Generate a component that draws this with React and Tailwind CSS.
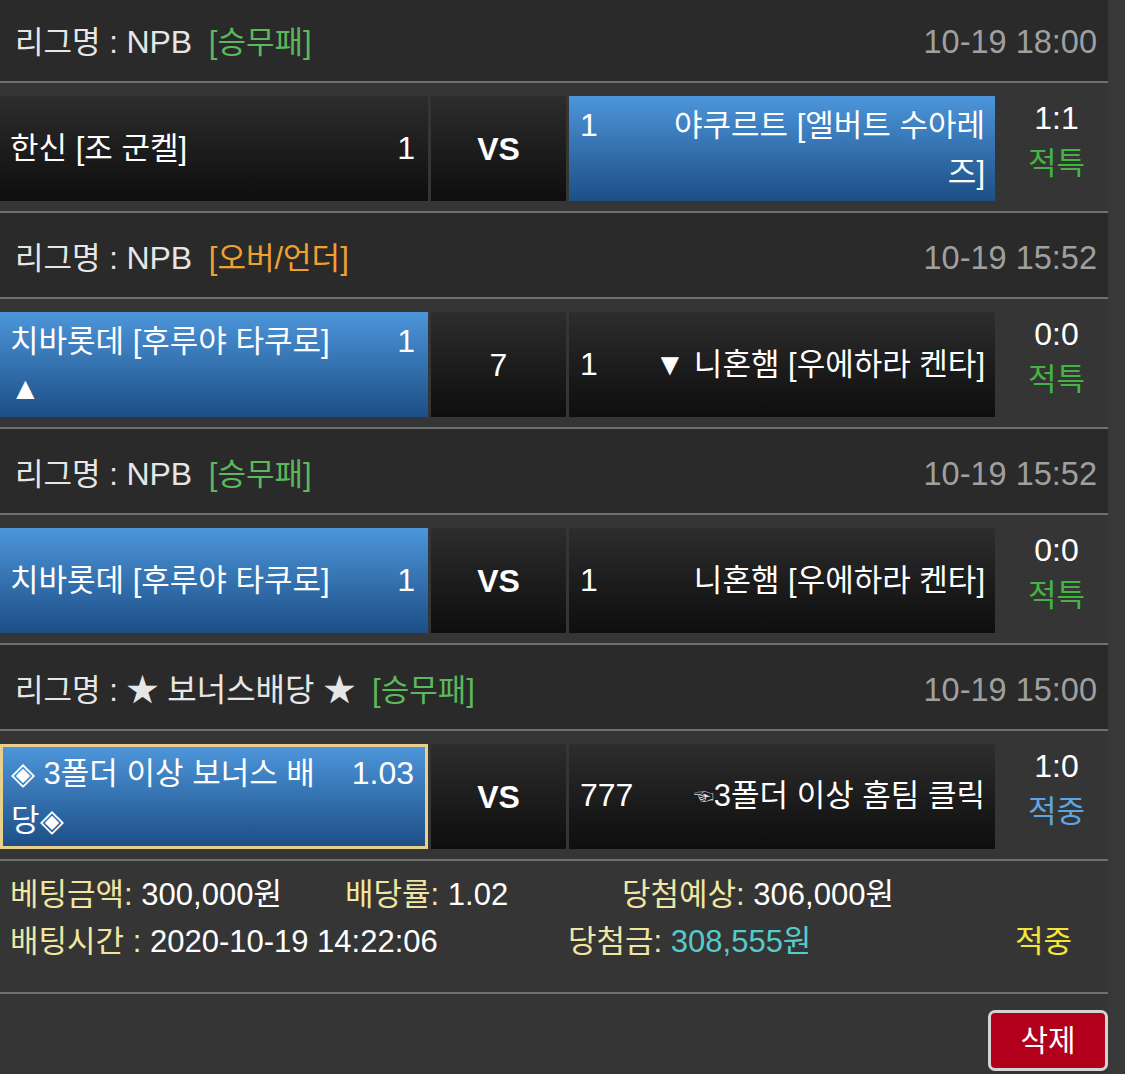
import React from 'react';

const games = [
  {
    id: 1,
    league: 'NPB',
    type: '[승무패]',
    typeColor: 'text-[#5cb85c]',
    time: '10-19 18:00',
    home: { name: '한신 [조 군켈]', odds: '1', picked: false },
    mid: 'VS',
    away: { name: '야쿠르트 [엘버트 수아레즈]', odds: '1', picked: true },
    score: '1:1',
    result: '적특',
    resultColor: 'text-[#43b443]',
  },
  {
    id: 2,
    league: 'NPB',
    type: '[오버/언더]',
    typeColor: 'text-[#f0a030]',
    time: '10-19 15:52',
    home: { name: '치바롯데 [후루야 타쿠로] ▲', odds: '1', picked: true },
    mid: '7',
    away: { name: '▼ 니혼햄 [우에하라 켄타]', odds: '1', picked: false },
    score: '0:0',
    result: '적특',
    resultColor: 'text-[#43b443]',
  },
  {
    id: 3,
    league: 'NPB',
    type: '[승무패]',
    typeColor: 'text-[#5cb85c]',
    time: '10-19 15:52',
    home: { name: '치바롯데 [후루야 타쿠로]', odds: '1', picked: true },
    mid: 'VS',
    away: { name: '니혼햄 [우에하라 켄타]', odds: '1', picked: false },
    score: '0:0',
    result: '적특',
    resultColor: 'text-[#43b443]',
  },
  {
    id: 4,
    league: '★ 보너스배당 ★',
    type: '[승무패]',
    typeColor: 'text-[#5cb85c]',
    time: '10-19 15:00',
    home: { name: '◈ 3폴더 이상 보너스 배당◈', odds: '1.03', picked: true, bonus: true },
    mid: 'VS',
    away: { name: '3폴더 이상 홈팀 클릭', odds: '777', picked: false, hand: true },
    score: '1:0',
    result: '적중',
    resultColor: 'text-[#5ea5e3]',
  },
];

const cellBg = (picked) =>
  picked
    ? 'bg-gradient-to-b from-[#4d96db] to-[#1d4f86]'
    : 'bg-gradient-to-b from-[#2d2d2d] to-[#0e0e0e]';

const GameBlock = ({ g }) => (
  <div>
    {/* 리그 헤더 */}
    <div className="h-[86px] bg-[#2a2a2a] flex items-center justify-between pl-[15px] pr-[11px] pt-[6px] border-b-2 border-[#6f6f6f]">
      <div className="text-[#e6e6e6]">
        리그명 : <span className="text-[32px]">{g.league}</span>{' '}
        <span className={`ml-[8px] ${g.typeColor}`}>{g.type}</span>
      </div>
      <div className="text-[#a0a0a0] text-[32.5px]">{g.time}</div>
    </div>

    {/* 경기 줄 */}
    <div className="h-[130px] flex pt-[13px] pb-[10px] border-b-2 border-[#6f6f6f]">
      <div
        className={`w-[428px] h-[105px] flex items-center ${cellBg(g.home.picked)} ${
          g.home.bonus ? 'border-[3px] border-[#e9d18c] pl-[8px] pr-[11px]' : 'pl-[10px] pr-[13px]'
        }`}
      >
        <div className="flex-1 flex items-start justify-between leading-[47px] text-white">
          <span className="w-[328px]">{g.home.name}</span>
          <span className="text-[32px]">{g.home.odds}</span>
        </div>
      </div>
      <div className={`ml-[3px] w-[135px] h-[105px] flex items-center justify-center text-white ${cellBg(false)}`}>
        <span className={g.mid === 'VS' ? 'font-bold text-[32px]' : 'text-[32px]'}>{g.mid}</span>
      </div>
      <div className={`ml-[3px] w-[426px] h-[105px] flex items-center pl-[11px] pr-[10px] ${cellBg(g.away.picked)}`}>
        <div className="flex-1 flex items-start justify-between leading-[47px] text-white">
          <span className="text-[32px]">{g.away.odds}</span>
          <span className="w-[338px] text-right">
            {g.away.hand && <span className="text-[20px] text-[#dddddd] align-middle">☜</span>}
            {g.away.name}
          </span>
        </div>
      </div>
      <div className="flex-1 flex flex-col items-center pl-[10px] leading-[45px]">
        <span className="text-white text-[32px]">{g.score}</span>
        <span className={g.resultColor}>{g.result}</span>
      </div>
    </div>
  </div>
);

const App = () => {
  return (
    <div
      className="min-h-[1074px] bg-[#383838] overflow-hidden text-[31px]"
      style={{ fontFamily: '"Liberation Sans", "Noto Sans CJK KR", sans-serif' }}
    >
      <div className="w-[1108px] bg-[#353535] -mt-[3px]">
        {games.map((g) => (
          <GameBlock key={g.id} g={g} />
        ))}

        {/* 베팅 요약 */}
        <div className="pt-[10px] pb-[27px] pl-[10px] leading-[47px] border-b-2 border-[#6f6f6f]">
          <div className="flex">
            <span className="w-[335px]">
              <span className="text-[#f0e6a2]">베팅금액:</span> <span className="text-white">300,000원</span>
            </span>
            <span className="w-[277px]">
              <span className="text-[#f0e6a2]">배당률:</span> <span className="text-white">1.02</span>
            </span>
            <span>
              <span className="text-[#f0e6a2]">당첨예상:</span> <span className="text-white">306,000원</span>
            </span>
          </div>
          <div className="flex">
            <span className="w-[558px]">
              <span className="text-[#f0e6a2]">배팅시간 :</span> <span className="text-white">2020-10-19 14:22:06</span>
            </span>
            <span className="w-[447px]">
              <span className="text-[#f0e6a2]">당첨금:</span> <span className="text-[#55cccc]">308,555원</span>
            </span>
            <span className="text-[#f4e43c]">적중</span>
          </div>
        </div>

        <div className="h-[81px] flex justify-end pt-[16px]">
          <button className="w-[120px] h-[61px] rounded-[7px] border-[3px] border-[#d4d4d4] bg-[#b2001c] text-white text-[30px]">
            삭제
          </button>
        </div>
      </div>
    </div>
  );
};

export default App;
